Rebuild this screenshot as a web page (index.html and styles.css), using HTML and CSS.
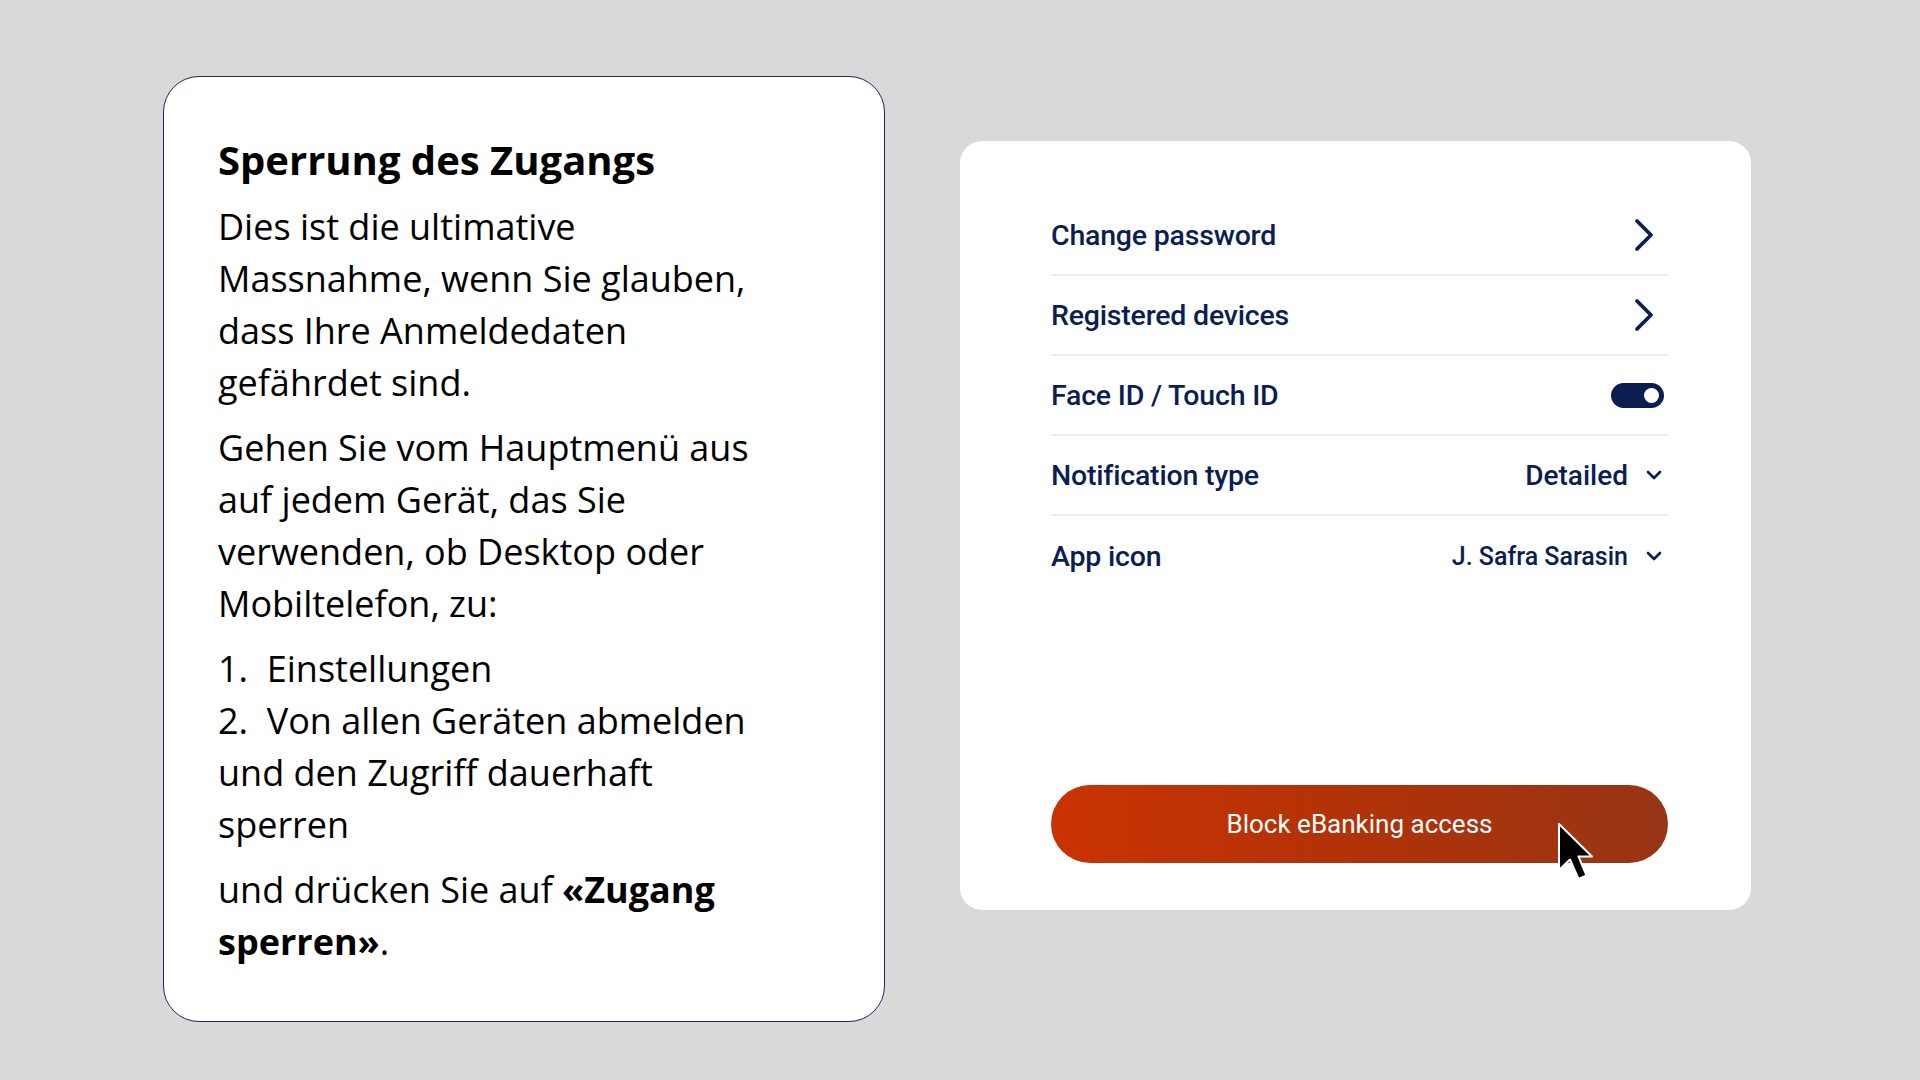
FILE: index.html
```html
<!DOCTYPE html>
<html lang="de">
<head>
  <meta charset="UTF-8">
  <title>Sperrung des Zugangs</title>
  <link rel="stylesheet" href="styles.css">
</head>
<body>
  <div class="stage">
    <div class="info-card">
      <h2>Sperrung des Zugangs</h2>
      <p>Dies ist die ultimative Massnahme, wenn Sie glauben, dass Ihre Anmeldedaten gefährdet sind.</p>
      <p>Gehen Sie vom Hauptmenü aus auf jedem Gerät, das Sie verwenden, ob Desktop oder Mobiltelefon, zu:</p>
      <p>1.&nbsp; Einstellungen<br>2.&nbsp; Von allen Geräten abmelden und den Zugriff dauerhaft sperren</p>
      <p>und drücken Sie auf <strong>«Zugang</strong> <strong>sperren»</strong>.</p>
    </div>

    <div class="settings-card">
      <ul class="settings">
        <li class="row">
          <span class="label">Change password</span>
          <svg class="chev" width="24" height="34" viewBox="0 0 24 34"><path d="M5 3 L19 17 L5 31" fill="none" stroke="#0b1d51" stroke-width="3.8" stroke-linecap="round" stroke-linejoin="round"/></svg>
        </li>
        <li class="row">
          <span class="label">Registered devices</span>
          <svg class="chev" width="24" height="34" viewBox="0 0 24 34"><path d="M5 3 L19 17 L5 31" fill="none" stroke="#0b1d51" stroke-width="3.8" stroke-linecap="round" stroke-linejoin="round"/></svg>
        </li>
        <li class="row">
          <span class="label">Face ID / Touch ID</span>
          <span class="toggle"><span class="knob"></span></span>
        </li>
        <li class="row">
          <span class="label">Notification type</span>
          <span class="value big">Detailed
            <svg class="caret" width="18" height="12" viewBox="0 0 18 12"><path d="M3 3 L9 9 L15 3" fill="none" stroke="#0b1d51" stroke-width="2.6" stroke-linecap="round" stroke-linejoin="round"/></svg>
          </span>
        </li>
        <li class="row">
          <span class="label">App icon</span>
          <span class="value">J. Safra Sarasin
            <svg class="caret" width="18" height="12" viewBox="0 0 18 12"><path d="M3 3 L9 9 L15 3" fill="none" stroke="#0b1d51" stroke-width="2.6" stroke-linecap="round" stroke-linejoin="round"/></svg>
          </span>
        </li>
      </ul>

      <div class="block-wrap">
        <button class="block-btn">Block eBanking access</button>
        <svg class="cursor" width="40" height="64" viewBox="0 0 40 64">
          <path d="M2 2 L2 48 L13 37.5 L21.5 57 L29.5 53.5 L21.5 34.5 L35 34.5 Z" fill="#000" stroke="#fff" stroke-width="2" stroke-linejoin="round"/>
        </svg>
      </div>
    </div>
  </div>
</body>
</html>
```

FILE: styles.css
```css
body {
  margin: 0;
  background-color: #d9d9d9;
  font-family: "Open Sans", sans-serif;
}
.stage {
  display: flex;
  align-items: flex-start;
  padding: 76px 0 0 163px;
  gap: 75px;
  height: 1004px;
}
.info-card {
  box-sizing: border-box;
  width: 722px;
  height: 946px;
  background-color: white;
  border: 1px solid #1c2a55;
  border-radius: 36px;
  padding: 58px 0 0 54px;
  color: #000;
}
.info-card h2 {
  margin: 0 0 16px 0;
  font-size: 40px;
  line-height: 50px;
  font-weight: 700;
}
.info-card p {
  width: 545px;
  margin: 0 0 13px 0;
  font-size: 36px;
  line-height: 52px;
}
.info-card strong {
  font-weight: 700;
}
.settings-card {
  box-sizing: border-box;
  width: 791px;
  height: 769px;
  margin-top: 65px;
  background-color: white;
  border-radius: 22px;
  padding: 55px 83px 0 91px;
  display: flex;
  flex-direction: column;
  color: #0b1d51;
  font-family: Roboto, "Liberation Sans", sans-serif;
}
.settings {
  list-style: none;
  margin: 0;
  padding: 0;
}
.row {
  height: 80px;
  display: flex;
  align-items: center;
  justify-content: space-between;
  border-bottom: 2px solid #ececec;
  box-sizing: border-box;
}
.row:last-child {
  border-bottom: none;
}
.label {
  font-size: 28.5px;
  font-weight: 500;
  letter-spacing: -0.2px;
}
.chev {
  margin-right: 12px;
}
.toggle {
  width: 53px;
  height: 25px;
  border-radius: 13px;
  background-color: #0b1d51;
  margin-right: 4px;
  display: flex;
  align-items: center;
  justify-content: flex-end;
  padding-right: 5px;
  box-sizing: border-box;
}
.knob {
  width: 15px;
  height: 15px;
  border-radius: 50%;
  background-color: white;
}
.value {
  display: flex;
  align-items: center;
  gap: 17px;
  font-size: 25px;
  font-weight: 500;
  margin-right: 5px;
}
.value.big {
  font-size: 28px;
}
.block-wrap {
  position: relative;
  margin-top: 189px;
}
.block-btn {
  width: 100%;
  height: 78px;
  border: none;
  border-radius: 39px;
  background: linear-gradient(90deg, #c93300 0%, #b23208 50%, #963516 100%);
  color: white;
  font-family: Roboto, "Liberation Sans", sans-serif;
  font-size: 26px;
  font-weight: 400;
  cursor: pointer;
}
.cursor {
  position: absolute;
  left: 506px;
  top: 37px;
}
```
